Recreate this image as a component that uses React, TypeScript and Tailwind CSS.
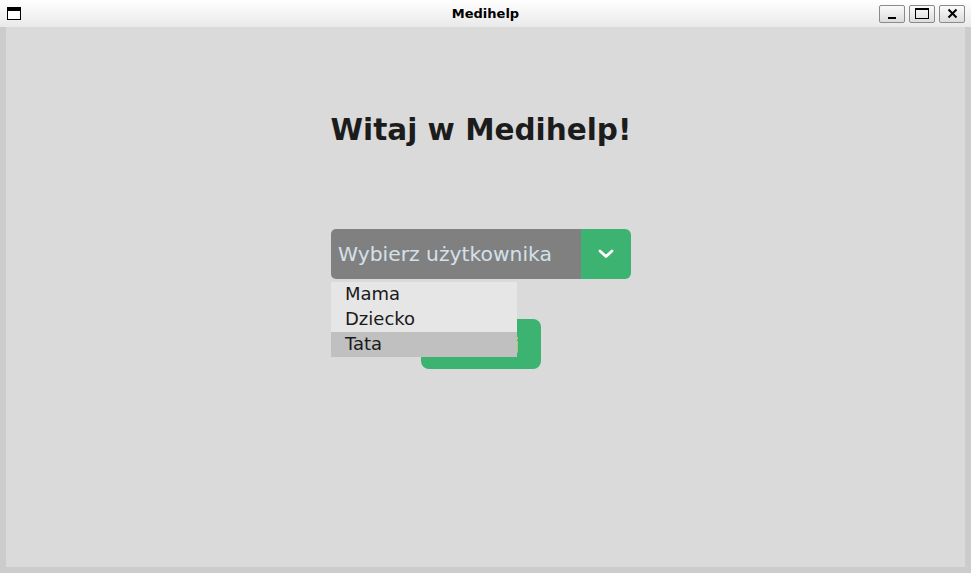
import { useState } from 'react'

const USERS = ['Mama', 'Dziecko', 'Tata']

function TitleButton({ children }: { children: React.ReactNode }) {
  return (
    <div className="w-[26px] h-[18px] flex items-center justify-center border border-[#8a8a8a] rounded-[2px] bg-gradient-to-b from-[#fbfbfb] to-[#dcdcdc]">
      {children}
    </div>
  )
}

function TitleBar() {
  return (
    <div className="relative h-[27px] flex items-center bg-gradient-to-b from-[#ffffff] to-[#e9e9e9] shrink-0">
      <div className="ml-[7px] w-[14px] h-[13px] border border-black border-t-[4px] bg-white" />
      <div className="absolute left-0 right-0 top-0 h-[27px] flex items-center justify-center pointer-events-none">
        <span className="text-[13px] font-bold text-black">Medihelp</span>
      </div>
      <div className="ml-auto mr-[6px] flex gap-[4px]">
        <TitleButton>
          <div className="w-[8px] h-[2px] bg-black mt-[8px]" />
        </TitleButton>
        <TitleButton>
          <div className="w-[14px] h-[11px] border border-black border-t-[2px]" />
        </TitleButton>
        <TitleButton>
          <svg width="11" height="11" viewBox="0 0 11 11">
            <path d="M1.5 1.5 L9.5 9.5 M9.5 1.5 L1.5 9.5" stroke="black" strokeWidth="2" />
          </svg>
        </TitleButton>
      </div>
    </div>
  )
}

export default function App() {
  const [selected] = useState(2)

  return (
    <div
      className="w-[971px] h-[573px] flex flex-col bg-[#cccccc] overflow-hidden"
      style={{ fontFamily: '"DejaVu Sans", sans-serif' }}
    >
      <TitleBar />
      <div className="flex-1 flex px-[6px] pb-[6px]">
        <div className="flex-1 bg-[#dadada]">
          <div className="ml-[325px] w-[300px] flex flex-col items-center">
            <h1 className="mt-[85px] whitespace-nowrap text-[29.5px] leading-[36px] font-bold text-[#1c1c1c]">
              Witaj w Medihelp!
            </h1>

            <div className="relative mt-[81px] w-[300px] h-[50px] flex rounded-[6px] overflow-visible">
              <div className="flex-1 flex items-center pl-[7px] bg-[#808080] rounded-l-[5px] text-[20.3px] text-[#d4e0ea]">
                Wybierz użytkownika
              </div>
              <div className="w-[50px] flex items-center justify-center bg-[#3cb371] rounded-r-[6px]">
                <svg width="16" height="10" viewBox="0 0 16 10">
                  <path d="M2 2 L8 7.5 L14 2" fill="none" stroke="white" strokeWidth="2.8" strokeLinecap="round" strokeLinejoin="round" />
                </svg>
              </div>

              <ul className="absolute left-0 top-[53px] w-[186px] bg-[#e6e6e6] z-10">
                {USERS.map((u, i) => (
                  <li
                    key={u}
                    className={`h-[25px] pl-[14px] pb-[2px] flex items-center text-[18px] text-[#1a1a1a] ${
                      i === selected ? 'bg-[#c0c0c0]' : ''
                    }`}
                  >
                    {u}
                  </li>
                ))}
              </ul>
            </div>

            <button
              type="button"
              className="mt-[40px] w-[120px] h-[50px] rounded-[8px] bg-[#3cb371] text-white text-[18px] font-bold"
            >
              Zaloguj
            </button>
          </div>
        </div>
      </div>
    </div>
  )
}
